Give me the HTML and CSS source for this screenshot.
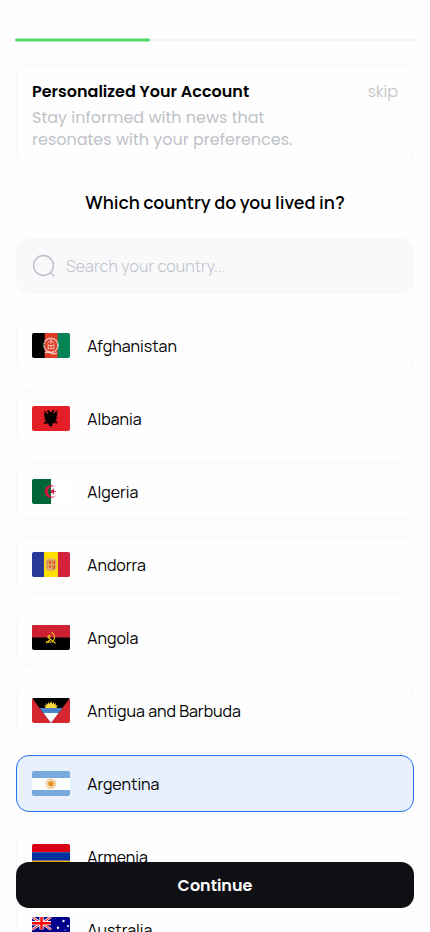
FILE: index.html
```html
<!DOCTYPE html>
<html lang="en">
<head>
<meta charset="utf-8">
<meta name="viewport" content="width=device-width, initial-scale=1">
<title>Personalize</title>
<link rel="stylesheet" href="styles.css">
</head>
<body>
<main class="screen">
  <div class="progress"><div class="progress-fill"></div></div>
  <section class="intro">
    <div class="intro-top"><h1 class="intro-title">Personalized Your Account</h1><a class="skip">skip</a></div>
    <p class="intro-text">Stay informed with news that<br>resonates with your preferences.</p>
  </section>
  <h2 class="question">Which country do you lived in?</h2>
  <div class="search">
    <svg class="search-icon" viewBox="0 0 24 24"><circle cx="11.5" cy="11.5" r="9.9"/><path d="M18.8 18.8 22 22"/></svg>
    <span class="placeholder">Search your country...</span>
  </div>
  <ul class="countries">
    <li class="country"><svg class="flag" viewBox="0 0 38 25"><path d="M0 0h13v25H0z"/><path fill="#df3b25" d="M12.7 0H26v25H12.7z"/><path fill="#078456" d="M25.6 0H38v25H25.6z"/><g fill="none" stroke="#fff" stroke-opacity=".75"><circle cx="19" cy="12.3" r="7" stroke-width="1.6" stroke-dasharray="2 .5"/><path stroke-width="1.3" d="M13 20q3-2 6 0t6 0"/><path stroke-width=".9" d="M15.5 10.5q3.5-5 7 0M15.5 15.8h7M16.2 11v4.5M21.8 11v4.5M17 12.5h4M19 6v5M18 14h2"/></g></svg><span class="name">Afghanistan</span></li>
    <li class="country"><svg class="flag" viewBox="0 0 38 25"><path fill="#e51f27" d="M0 0h38v25H0z"/><path d="M19 6.7l-2.2-2.4-2.6.8 1.6 1 .3 2.2-4.4-3.8 1 3-1.2.4 1.4 1.2-1.2.9 1.6.9-1.6 1.3 1.9.4-1.7 1.6 2.4-.1-1.8 2.1-1 2 2.3-.8 1-1.5-.2 2 2-.4.2 1.7L19 21l1.5-2.2.2-1.7 2 .4-.2-2 1 1.5 2.3.8-1-2-1.8-2.1 2.4.1-1.7-1.6 1.9-.4-1.6-1.3 1.6-.9-1.2-.9 1.4-1.2-1.2-.4 1-3-4.4 3.8.3-2.2 1.6-1-2.6-.8z"/></svg><span class="name">Albania</span></li>
    <li class="country"><svg class="flag" viewBox="0 0 38 25"><path fill="#fff" d="M0 0h38v25H0z"/><path fill="#006536" d="M0 0h19v25H0z"/><path fill="#d71640" d="M24 8.6A6.3 6.3 0 1 0 24 16.4 5 5 0 1 1 24 8.6zM24.6 12.5l-2.7.8 0 2.8-1.6-2.3-2.6.9 1.7-2.2-1.7-2.2 2.6.9 1.6-2.3 0 2.8z"/></svg><span class="name">Algeria</span></li>
    <li class="country"><svg class="flag" viewBox="0 0 38 25"><path fill="#293896" d="M0 0h12v25H0z"/><path fill="#ffdf00" d="M12 0h14v25H12z"/><path fill="#d4213d" d="M26 0h12v25H26z"/><rect x="13.5" y="6.8" width="11" height="12" rx="4" fill="#d9ab72"/><path fill="#d94a29" d="M15.5 8.8h3.2v3.3h-3.2zM20 8.8h3v3.3h-3zM15.5 13.2h3.2v2.6h-3.2zM20 13.2h3v3l-2 1z"/><path stroke="#f0c34d" stroke-width=".8" d="M16.5 9v7M21 9v7M15 6.7h8"/></svg><span class="name">Andorra</span></li>
    <li class="country"><svg class="flag" viewBox="0 0 38 25"><path d="M0 0h38v25H0z"/><path fill="#cd2032" d="M0 0h38v12.5H0z"/><g fill="none" stroke="#f9d616"><path stroke-width="1.3" stroke-dasharray="1.5 .5" d="M19.5 7.2c4 2.4 4 8.3-.2 9.8-1.6.5-3.2.2-4.7-.7"/><path stroke-width="1.1" d="M15.5 12l8.1 6.4M18 15l-4 3"/></g><path fill="#f9d616" d="M17.3 9.2l.5 1.2 1.3.1-1 .9.3 1.3-1.1-.7-1.2.7.4-1.3-1-.9 1.3-.1z"/></svg><span class="name">Angola</span></li>
    <li class="country"><svg class="flag" viewBox="0 0 38 25"><path fill="#d5262f" d="M0 0h38v25H0z"/><path d="M0 0h38L19 25z"/><path fill="#4785cb" d="M7.6 10h22.8l-3.8 5H11.4z"/><path fill="#fff" d="M11.4 15h15.2L19 25z"/><path fill="#fbd83b" d="M12.7 10l1.1-1.1-1.9-1.7 2.6.4-.7-2.5 2.2 1.4.1-2.6 1.6 2L19 3.2l1.3 2.7 1.6-2 .1 2.6 2.2-1.4-.7 2.5 2.6-.4-1.9 1.7 1.1 1.1z"/></svg><span class="name">Antigua and Barbuda</span></li>
    <li class="country selected"><svg class="flag" viewBox="0 0 38 25"><path fill="#fff" d="M0 0h38v25H0z"/><path fill="#78aadc" d="M0 0h38v7H0zM0 19h38v6H0z"/><circle cx="19" cy="12.7" r="4.5" fill="none" stroke="#edbd83" stroke-width="2" stroke-dasharray="1 .5"/><circle cx="19" cy="12.7" r="3" fill="#ee9d2e"/><path fill="none" stroke="#a46b27" stroke-width=".6" d="M17.5 12h1M19.7 12h1M18 14h2"/></svg><span class="name">Argentina</span></li>
    <li class="country"><svg class="flag" viewBox="0 0 38 25"><path fill="#d90012" d="M0 0h38v8.3H0z"/><path fill="#0033a0" d="M0 8.3h38v8.4H0z"/><path fill="#f2a800" d="M0 16.7h38V25H0z"/></svg><span class="name">Armenia</span></li>
    <li class="country"><svg class="flag" viewBox="0 0 38 25"><path fill="#00008b" d="M0 0h38v25H0z"/><path stroke="#fff" stroke-width="2.6" d="M0 0l19 12.5M19 0L0 12.5"/><path stroke="#f00" stroke-width="1" d="M0 0l19 12.5M19 0L0 12.5"/><path stroke="#fff" stroke-width="4.2" d="M9.5 0v12.5M0 6.2h19"/><path stroke="#f00" stroke-width="2.4" d="M9.5 0v12.5M0 6.2h19"/><g fill="#fff"><circle cx="31.5" cy="4" r="1.2"/><circle cx="26" cy="10.8" r="1.2"/><circle cx="36" cy="9" r="1.1"/><circle cx="33" cy="13" r=".6"/><circle cx="31.5" cy="20" r="1.2"/><circle cx="9.5" cy="18.7" r="2"/></g></svg><span class="name">Australia</span></li>
  </ul>
</main>
<button class="continue">Continue</button>
</body>
</html>
```
FILE: styles.css
```css
* { box-sizing: border-box; }
body { margin: 0; height: 932px; overflow: hidden; background: #fefefe; color: #000; font-family: Manrope, Inter, sans-serif; }
h1, h2, p, ul { margin: 0; padding: 0; }
.screen { padding: 38px 16px 0; }
.progress { height: 4px; margin: 0 -1.5px; border-radius: 2px; background: linear-gradient(#f9fafa 1px, #f3f5f5 1px 3px, #f9fafa 3px); }
.progress-fill { width: 135.5px; height: 4px; border-radius: 2px; background: linear-gradient(#a2ebaf 1px, #50db68 1px 3px, #a2ebaf 3px); }
.intro { height: 102px; margin-top: 22px; padding: 15px; border: 1px solid #f8f8f8; border-radius: 13px; font-family: Poppins, Inter, sans-serif; font-size: 16px; }
.intro-top { display: flex; justify-content: space-between; line-height: 24px; }
.intro-title { font-size: 16px; font-weight: 600; }
.skip, .intro-text { color: #bfc2c8; }
.skip { font-weight: 300; }
.intro-text { margin-top: 3px; line-height: 22px; }
.question { margin-top: 23px; text-align: center; font-size: 18px; line-height: 26px; font-weight: 600; }
.search { display: flex; align-items: center; height: 56px; margin-top: 23px; padding: 0 16px; border-radius: 13px; background: #f8f9fb; }
.search-icon { width: 24px; height: 24px; fill: none; stroke: #bfc2c8; stroke-width: 1.5; stroke-linecap: round; }
.placeholder { margin-left: 10px; font-size: 16px; font-weight: 300; letter-spacing: .16px; color: #bfc2c8; }
.countries { display: grid; gap: 16px; margin-top: 23px; list-style: none; }
.country { display: flex; align-items: center; height: 57px; padding: 0 15px; border: 1px solid #f8f8f8; border-radius: 13px; }
.selected { border-color: #2571e8; background: #e8effd; }
.flag { width: 38px; height: 25px; border-radius: 2px; }
.name { margin-left: 17.3px; padding-top: 1px; font-size: 16px; line-height: 22px; }
.continue { position: fixed; left: 16px; right: 16px; bottom: 24px; height: 46px; padding: 0; border: 0; border-radius: 13px; background: #0f1014; color: #fff; font: 600 16px Poppins, Inter, sans-serif; }
```
